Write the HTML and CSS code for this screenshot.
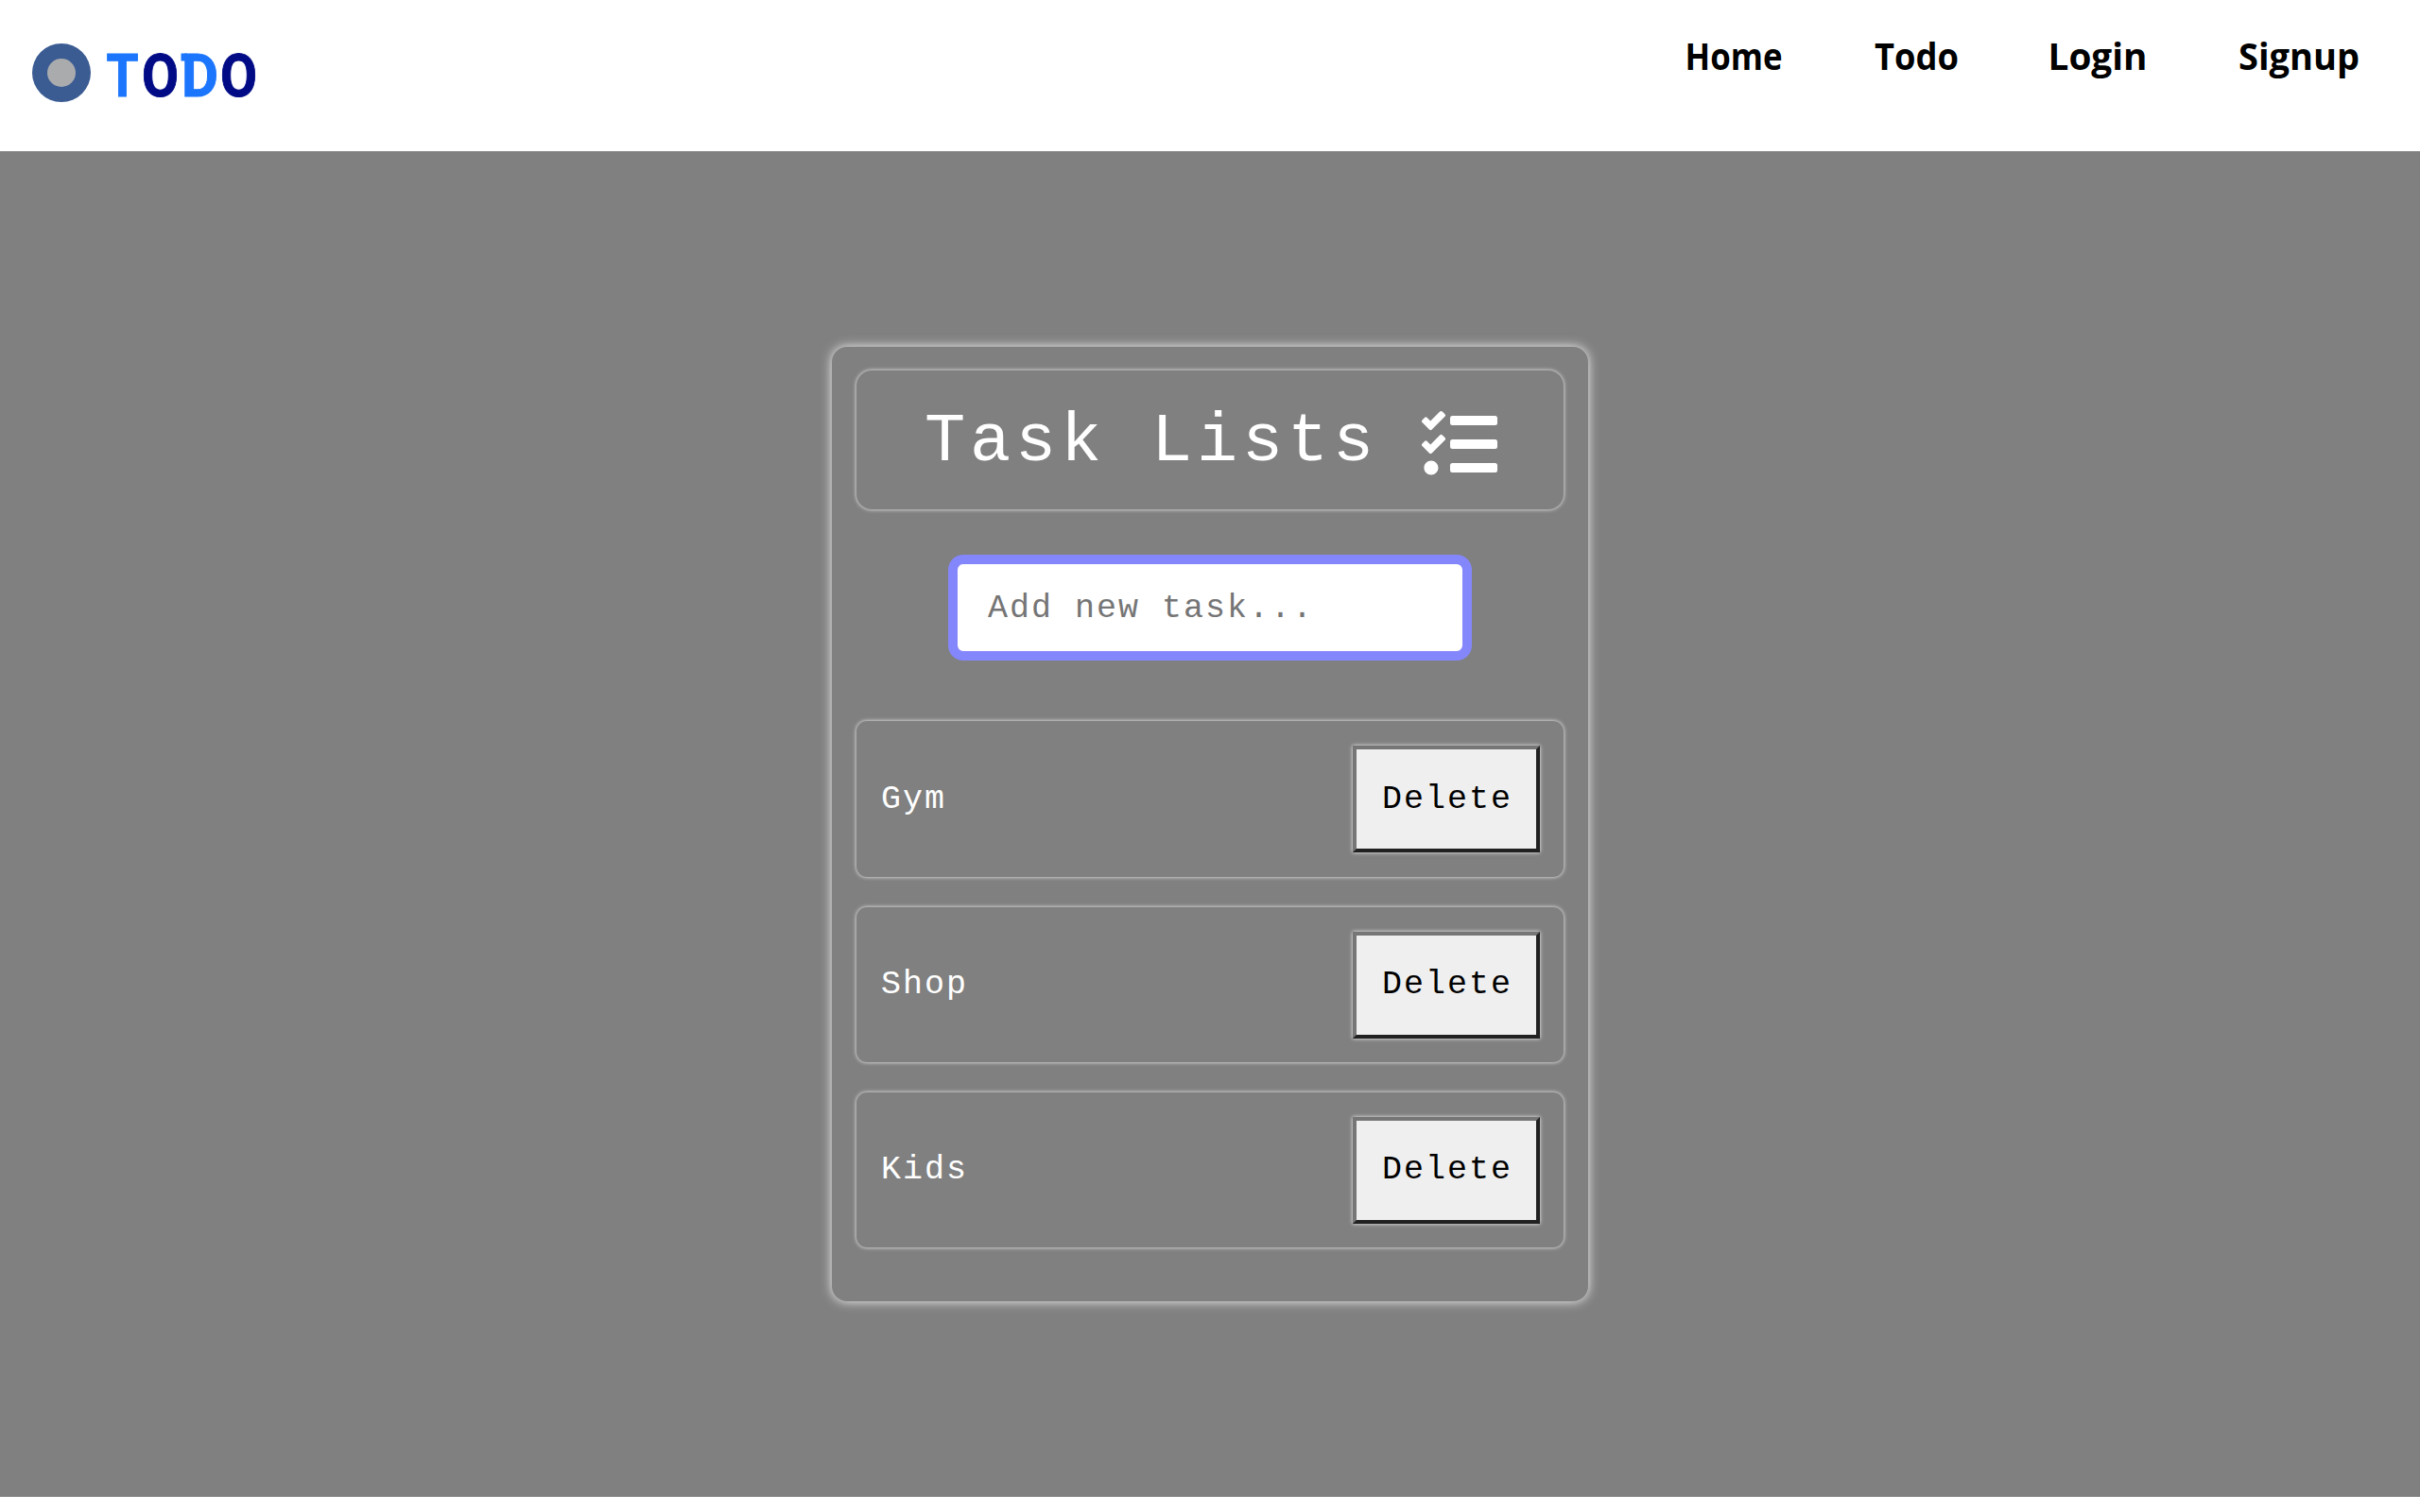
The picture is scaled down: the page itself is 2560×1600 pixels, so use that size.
FILE: index.html
```html
<!DOCTYPE html>
<html lang="en">
<head>
<meta charset="utf-8">
<title>Todo</title>
<link rel="stylesheet" href="styles.css">
</head>
<body>
<header class="header">
  <a class="logo" aria-label="Todo">
    <svg width="244" height="100" viewBox="0 0 244 100">
      <circle cx="31" cy="31" r="31" fill="#3b5c93"/>
      <circle cx="31" cy="31" r="15" fill="#a9abad"/>
      <g class="logo-text">
        <text class="light" x="78.500" y="56" textLength="34" lengthAdjust="spacingAndGlyphs">T</text>
        <text class="dark" x="116" y="56" textLength="39" lengthAdjust="spacingAndGlyphs">O</text>
        <text class="light" x="158" y="56" textLength="39" lengthAdjust="spacingAndGlyphs">D</text>
        <text class="dark" x="199" y="56" textLength="39" lengthAdjust="spacingAndGlyphs">O</text>
      </g>
      <rect class="light" x="157.500" y="10.500" width="6" height="8"/>
    </svg>
  </a>
  <nav class="nav">
    <a><svg width="99" height="60"><text x="-2.500" y="36" textLength="103" lengthAdjust="spacingAndGlyphs">Home</text></svg></a>
    <a><svg width="87" height="60"><text x="0" y="36" textLength="89" lengthAdjust="spacingAndGlyphs">Todo</text></svg></a>
    <a><svg width="101" height="60"><text x="-2.500" y="36" textLength="105" lengthAdjust="spacingAndGlyphs">Login</text></svg></a>
    <a><svg width="126" height="60"><text x="-1" y="36" textLength="128" lengthAdjust="spacingAndGlyphs">Signup</text></svg></a>
  </nav>
</header>
<main class="main">
  <section class="card">
    <h1 class="title">Task Lists
      <svg class="title-icon" viewBox="0 0 512 512"><path fill="currentColor" d="M139.610 35.500a12 12 0 0 0-17 0L58.930 98.810l-22.700-22.120a12 12 0 0 0-17 0L3.530 92.410a12 12 0 0 0 0 17l47.590 47.400a12.780 12.780 0 0 0 17.610 0l15.590-15.620L156.520 69a12.090 12.090 0 0 0 .09-17zm0 159.190a12 12 0 0 0-17 0l-63.680 63.720-22.700-22.100a12 12 0 0 0-17 0L3.530 252a12 12 0 0 0 0 17L51 316.500a12.770 12.770 0 0 0 17.600 0l15.700-15.690 72.200-72.220a12 12 0 0 0 .09-16.900zM64 368c-26.490 0-48.590 21.500-48.590 48S37.530 464 64 464a48 48 0 0 0 0-96zm432 16H208a16 16 0 0 0-16 16v32a16 16 0 0 0 16 16h288a16 16 0 0 0 16-16v-32a16 16 0 0 0-16-16zm0-320H208a16 16 0 0 0-16 16v32a16 16 0 0 0 16 16h288a16 16 0 0 0 16-16V80a16 16 0 0 0-16-16zm0 160H208a16 16 0 0 0-16 16v32a16 16 0 0 0 16 16h288a16 16 0 0 0 16-16v-32a16 16 0 0 0-16-16z"/></svg>
    </h1>
    <input class="new-task" type="text" placeholder="Add new task...">
    <ul class="tasks">
      <li class="task"><span>Gym</span><button class="delete">Delete</button></li>
      <li class="task"><span>Shop</span><button class="delete">Delete</button></li>
      <li class="task"><span>Kids</span><button class="delete">Delete</button></li>
    </ul>
  </section>
</main>
</body>
</html>
```
FILE: styles.css
```css
* {
  box-sizing: border-box;
}

body {
  margin: 0;
  background: #fff;
  font-family: "Liberation Mono", monospace;
  font-size: 35px;
  letter-spacing: 2px;
}

.header {
  display: flex;
  justify-content: space-between;
  height: 160px;
  padding: 38px 65px 0 34px;
}

.logo {
  padding-top: 8px;
}

.logo svg {
  display: block;
  overflow: visible;
}

.logo-text {
  font: 700 63px/1 Roboto, sans-serif;
  letter-spacing: 0;
}

.logo-text .light {
  stroke: #1c76fd;
}

.logo-text .dark {
  stroke: #000b85;
}

.light {
  fill: #1c76fd;
}

.dark {
  fill: #000b85;
}

.nav {
  display: flex;
  gap: 99px;
  font: 700 39px "Open Sans", sans-serif;
  letter-spacing: 0;
}

.nav svg {
  display: block;
  overflow: visible;
}

.main {
  display: flex;
  justify-content: center;
  align-items: flex-start;
  height: 1424px;
  padding-top: 207px;
  background: #808080;
}

.card {
  display: flex;
  flex-direction: column;
  align-items: center;
  width: 800px;
  height: 1010px;
  padding: 25px 26px;
  border-radius: 16px;
  box-shadow: 0 0 12px rgba(255, 255, 255, 0.9);
  color: #fff;
}

.title {
  display: flex;
  justify-content: center;
  align-items: center;
  gap: 46px;
  width: 100%;
  height: 147px;
  margin: 0;
  padding: 5px 0 0 2px;
  border-radius: 16px;
  box-shadow: 0 0 4px rgba(255, 255, 255, 0.9);
  font-size: 72px;
  font-weight: 400;
  letter-spacing: 4.8px;
}

.title-icon {
  width: 80px;
  height: 80px;
  margin-top: 4px;
}

.new-task {
  width: 554px;
  height: 112px;
  margin: 48px 0 64px;
  padding: 2px 32px 0;
  border: 10px solid #8486fc;
  border-radius: 16px;
  outline: none;
  background: #fff;
  font: inherit;
  letter-spacing: 2px;
}

.new-task::placeholder {
  color: #757575;
}

.tasks {
  display: grid;
  gap: 32px;
  width: 100%;
  margin: 0;
  padding: 0;
  list-style: none;
}

.task {
  display: flex;
  justify-content: space-between;
  align-items: center;
  height: 164px;
  padding: 0 25px 0 26px;
  border-radius: 11px;
  box-shadow: 0 0 4px rgba(255, 255, 255, 0.9);
}

.task:first-child {
  height: 165px;
}

.delete {
  width: 198px;
  height: 113px;
  padding: 0 0 0 2px;
  border: 4px solid;
  border-color: #767676 #212121 #212121 #767676;
  background: #efefef;
  box-shadow: 0 0 4px rgba(255, 255, 255, 0.9);
  color: #000;
  font: inherit;
  letter-spacing: 2px;
}
```
